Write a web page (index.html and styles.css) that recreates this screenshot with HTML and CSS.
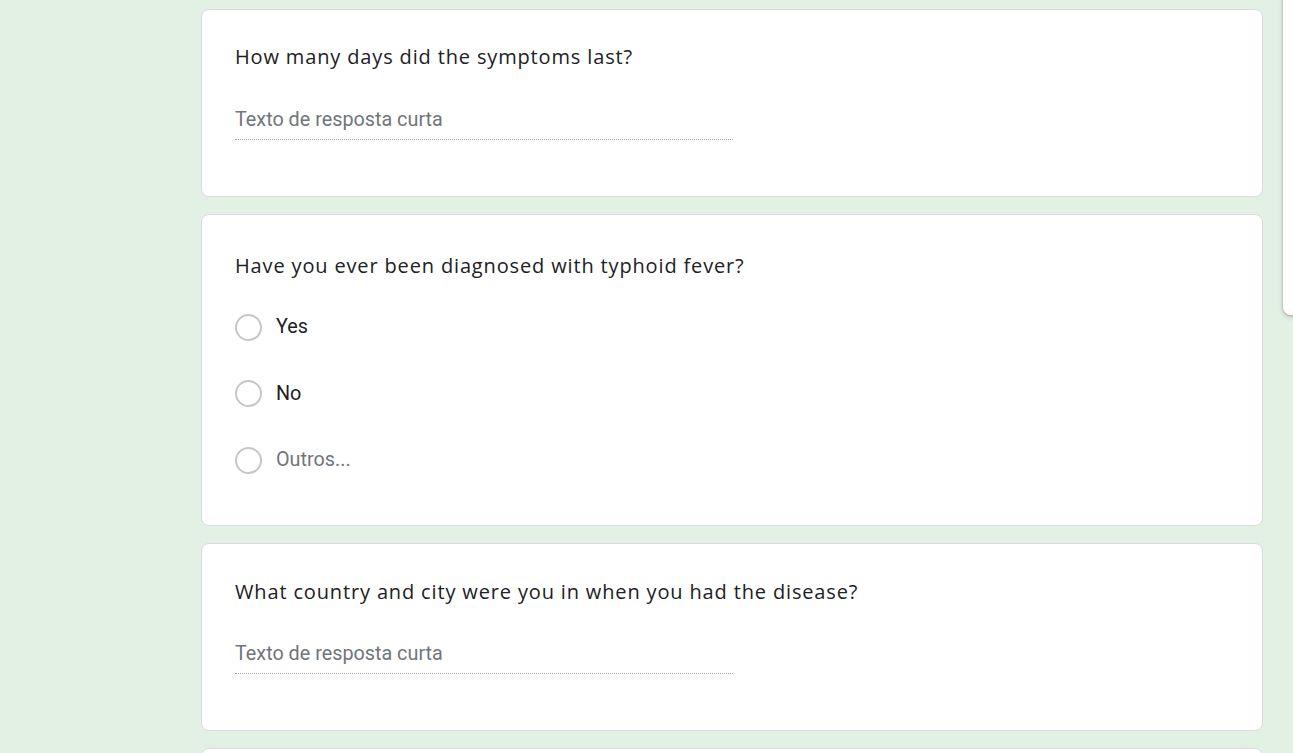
FILE: index.html
```html
<!DOCTYPE html>
<html lang="pt">
<head>
<meta charset="utf-8">
<title>Form</title>
<link rel="stylesheet" href="styles.css">
</head>
<body>
<main class="page">
  <section class="card card-q1">
    <div class="q-title">How many days did the symptoms last?</div>
    <div class="short-answer"><span>Texto de resposta curta</span></div>
  </section>
  <section class="card card-q2">
    <div class="q-title">Have you ever been diagnosed with typhoid fever?</div>
    <ul class="options">
      <li class="option"><span class="radio"></span><span class="opt-label">Yes</span></li>
      <li class="option"><span class="radio"></span><span class="opt-label">No</span></li>
      <li class="option"><span class="radio"></span><span class="opt-label muted">Outros...</span></li>
    </ul>
  </section>
  <section class="card card-q3">
    <div class="q-title">What country and city were you in when you had the disease?</div>
    <div class="short-answer"><span>Texto de resposta curta</span></div>
  </section>
  <section class="card card-q4"></section>
</main>
<aside class="side-toolbar"></aside>
</body>
</html>
```
FILE: styles.css
```css
html, body {
  margin: 0;
  padding: 0;
  height: 100%;
  overflow: hidden;
}
body {
  background: #e3f1e5;
  font-family: Roboto, "Noto Sans", Arial, sans-serif;
  color: #202124;
}
.page {
  display: flex;
  flex-direction: column;
  gap: 17px;
  width: 1062px;
  margin-left: 201px;
  padding-top: 9px;
}
.card {
  background: #fff;
  border: 1px solid #dadce0;
  border-radius: 8px;
  padding: 35px 33px 0 33px;
  box-sizing: border-box;
  flex: none;
}
.card-q1 { height: 188px; }
.card-q3 { height: 188px; padding-top: 36px; }
.card-q2 { height: 312px; padding-top: 39px; }
.card-q4 { height: 60px; }
.q-title {
  font-family: "Open Sans", "Noto Sans", sans-serif;
  font-size: 20px;
  line-height: 24px;
  letter-spacing: 0.85px;
  color: #202124;
}
.short-answer {
  width: 498px;
  margin-top: 39px;
  padding-bottom: 7px;
  border-bottom: 1px dotted #9e9e9e;
  font-size: 19.8px;
  line-height: 24px;
  color: #70757a;
}
.card-q3 .short-answer { margin-top: 38px; }
.options {
  list-style: none;
  margin: 16px 0 0 0;
  padding: 0;
}
.option {
  display: flex;
  align-items: center;
  height: 66.5px;
}
.radio {
  width: 23px;
  height: 23px;
  border: 2px solid #c4c7c5;
  border-radius: 50%;
  flex: none;
}
.opt-label {
  margin-left: 14px;
  font-size: 19.8px;
  line-height: 24px;
  color: #202124;
}
.opt-label.muted { color: #70757a; }
.side-toolbar {
  position: fixed;
  left: 1283px;
  top: -10px;
  width: 60px;
  height: 325px;
  background: #fff;
  border-radius: 8px;
  box-shadow: 0 1px 3px rgba(60,64,67,0.35), 0 2px 6px rgba(60,64,67,0.15);
}
```
